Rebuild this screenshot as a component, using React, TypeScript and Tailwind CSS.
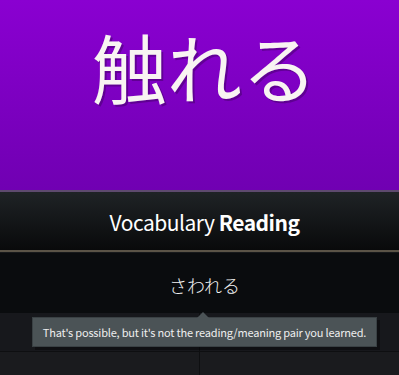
import React from "react";

const font = { fontFamily: '"Noto Sans CJK JP", "Noto Sans", sans-serif' };

const App = () => {
  return (
    <div className="w-[399px] h-[375px] overflow-hidden bg-[#1a1b1e]" style={font}>
      {/* character */}
      <div className="h-[192px] bg-gradient-to-b from-[#8a00d1] to-[#7000b2] border-b-2 border-[#5e4a6e] flex items-center justify-center pb-[60px] pl-[10px]">
        <span className="text-[75px] leading-none text-[#f8f4f2] [text-shadow:2px_2px_0_rgba(60,0,90,0.45)]">
          触れる
        </span>
      </div>

      {/* question type */}
      <div className="h-[60px] bg-gradient-to-b from-[#1f2326] to-[#090a0b] border-b-2 border-[#5b5447] flex items-center justify-center pt-[4px] pl-[10px]">
        <span className="text-[21px] text-white tracking-[-0.5px]">
          Vocabulary <span className="font-bold">Reading</span>
        </span>
      </div>

      {/* answer */}
      <div className="h-[61px] bg-[#0a0c0e] border-t border-[#17191b] flex items-center justify-center pt-[5px] pl-[10px]">
        <span className="text-[18px] text-[#f4f4f4] font-light">さわれる</span>
      </div>

      {/* buttons */}
      <div className="relative">
        <div className="grid grid-cols-2 h-[39px] bg-[#17181c] border-b border-[#0e0f11]">
          <div className="border-r border-[#0e0f11]" />
          <div />
        </div>
        <div className="grid grid-cols-2 h-[30px] bg-[#1a1b1e]">
          <div className="border-r border-[#0e0f11]" />
          <div />
        </div>

        <div className="absolute left-[32px] top-[4px] w-[345px] h-[30px] bg-[#4b5356] border border-[#3a4144] shadow-[3px_3px_0_rgba(0,0,0,0.35)] flex items-center justify-center">
          <div className="absolute -top-[6px] left-[164px] w-0 h-0 border-l-[6px] border-r-[6px] border-b-[6px] border-l-transparent border-r-transparent border-b-[#4b5356]" />
          <span className="text-[11px] tracking-[-0.2px] text-[#eeeeee] whitespace-nowrap">
            That's possible, but it's not the reading/meaning pair you learned.
          </span>
        </div>
      </div>
    </div>
  );
};

export default App;
